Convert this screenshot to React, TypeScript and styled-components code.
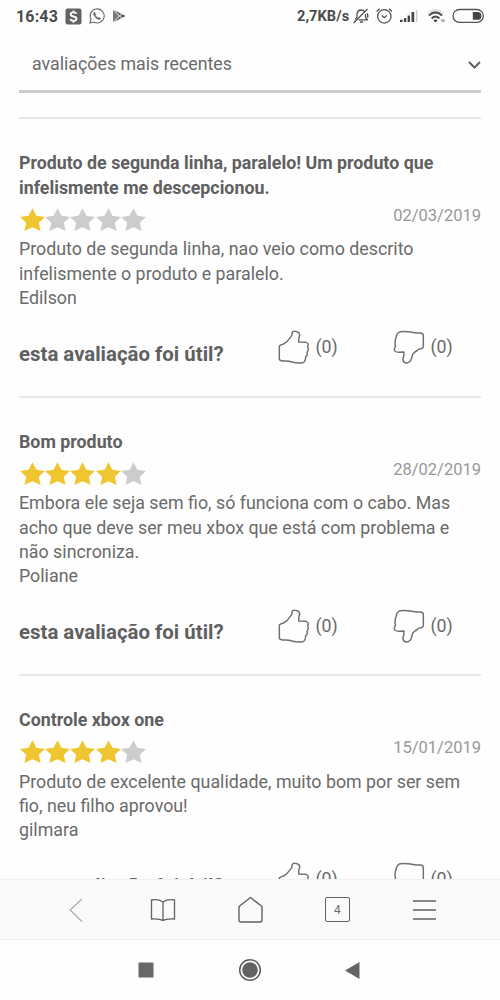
import React from 'react';
import styled, { createGlobalStyle } from 'styled-components';

const GlobalStyle = createGlobalStyle`
  *, *::before, *::after { box-sizing: border-box; }
  body { margin: 0; background: #fefefe; }
`;

const Screen = styled.div`
  display: flex;
  flex-direction: column;
  width: 500px;
  height: 1000px;
  overflow: hidden;
  background: #fefefe;
  color: #6a6a6a;
  font-family: Roboto, 'Liberation Sans', sans-serif;
  svg { display: block; flex: none; }
`;

const StatusBar = styled.header`
  display: flex;
  flex: none;
  align-items: center;
  height: 32px;
  padding: 0 15px 0 16px;
  color: #4b4b4b;
`;

const Clock = styled.span`
  width: 49px;
  font-size: 16px;
  font-weight: 700;
  letter-spacing: 0.15px;
  white-space: nowrap;
`;

const Notices = styled.div`
  display: flex;
  align-items: center;
  gap: 7px;
`;

const Indicators = styled.div`
  display: flex;
  align-items: center;
  margin-left: auto;
`;

const Speed = styled.span`
  width: 55px;
  font-size: 14.6px;
  font-weight: 700;
  letter-spacing: 0.05px;
  white-space: nowrap;
`;

const Gap = styled.span<{ $w: number }>`
  flex: none;
  width: ${(p) => p.$w}px;
`;

const Content = styled.main`
  flex: none;
  height: 847px;
  padding: 0 19px;
  overflow: hidden;
`;

const SortSelect = styled.div`
  display: flex;
  align-items: center;
  justify-content: space-between;
  height: 61px;
  padding: 4px 0 0 13px;
  margin-bottom: 24.4px;
  border-bottom: 3px solid #cccccc;
  font-size: 17.8px;
`;

const Review = styled.article`
  height: 278.2px;
  padding-top: 32px;
  border-top: 2px solid #e7e7e7;
`;

const Title = styled.h2`
  margin: 0;
  font-size: 17.82px;
  font-weight: 700;
  line-height: 24.3px;
  color: #606060;
  white-space: nowrap;
`;

const Meta = styled.div`
  display: flex;
  justify-content: space-between;
  height: 37.5px;
  padding-top: 8px;
`;

const Stars = styled.div`
  display: flex;
  padding-left: 0.5px;
`;

const DateText = styled.time`
  font-size: 16.5px;
  line-height: 16px;
  color: #989898;
`;

const Body = styled.p`
  margin: 0;
  font-size: 17.82px;
  line-height: 24.3px;
  white-space: nowrap;
`;

const Feedback = styled.div`
  display: flex;
  align-items: flex-start;
  padding-top: 20px;
`;

const Question = styled.strong`
  flex: none;
  width: 259px;
  padding-top: 11.4px;
  font-size: 20.4px;
  line-height: 24px;
  color: #606060;
  white-space: nowrap;
`;

const Vote = styled.button`
  display: flex;
  flex: none;
  width: 115px;
  gap: 5.5px;
  padding: 0;
  border: 0;
  background: none;
  color: inherit;
  font: 17.8px/33px Roboto, 'Liberation Sans', sans-serif;
`;

const BrowserBar = styled.nav`
  display: flex;
  flex: none;
  align-items: center;
  justify-content: space-between;
  height: 61px;
  padding: 0 62px;
  border-top: 1px solid #f0f0f0;
  border-bottom: 1px solid #f0f0f0;
  background: #fafafa;
`;

const TabCount = styled.span`
  display: grid;
  place-items: center;
  width: 25px;
  height: 25px;
  margin: 0 1px;
  border: 1.5px solid #626262;
  border-radius: 2px;
  font-size: 12px;
`;

const SystemBar = styled.nav`
  display: flex;
  flex: none;
  align-items: center;
  justify-content: space-between;
  height: 60px;
  padding: 0 140px 0 138px;
`;

const STAR = 'M12.5 0.2L16.4 7.8L25 8.9L18.8 14.7L20.6 23L12.5 19.2L4.4 23L6.2 14.7L0 8.9L8.6 7.8Z';

function Rating({ value }: { value: number }) {
  return (
    <Stars>
      {[0, 1, 2, 3, 4].map((i) => (
        <svg key={i} width="25.4" height="23" viewBox="0 0 25.4 23">
          <path d={STAR} fill={i < value ? '#efc62f' : '#cccccc'} />
        </svg>
      ))}
    </Stars>
  );
}

function ThumbUp() {
  return (
    <svg width="32" height="34" viewBox="0 0 96 102" fill="none" stroke="#707070" strokeWidth="4.4" strokeLinejoin="round">
      <path d="M4 48Q7 44 17 42Q20 38 25 37L37 22Q43 18 42 9Q44 3 52 4Q63 5 65 14Q66 17 63 21L62 36L84 37Q91 39 91 45Q88 49 90 54Q92 60 87 67Q90 76 83 80Q83 88 80 94Q76 100 65 99Q53 99 42 96Q31 92 18 93Q7 93 4 88V48Z" />
    </svg>
  );
}

function ThumbDown() {
  return (
    <svg width="32" height="34" viewBox="0 0 96 102" fill="none" stroke="#707070" strokeWidth="4.4" strokeLinejoin="round">
      <path d="M21 5Q36 3 53 6Q66 10 82 9Q91 10 91 17V50Q90 56 84 56Q77 56 73 61Q68 65 64 67Q57 72 57 81Q55 86 53 92Q47 100 40 99Q32 98 30 90Q29 86 32 80L33 66L17 67Q5 66 4 60Q4 52 8 48Q4 41 7 35Q6 29 9 24Q10 11 21 5Z" />
    </svg>
  );
}

type ReviewData = { title: string[]; stars: number; date: string; lines: string[] };

const REVIEWS: ReviewData[] = [
  {
    title: ['Produto de segunda linha, paralelo! Um produto que', 'infelismente me descepcionou.'],
    stars: 1,
    date: '02/03/2019',
    lines: ['Produto de segunda linha, nao veio como descrito', 'infelismente o produto e paralelo.', 'Edilson'],
  },
  {
    title: ['Bom produto'],
    stars: 4,
    date: '28/02/2019',
    lines: ['Embora ele seja sem fio, só funciona com o cabo. Mas', 'acho que deve ser meu xbox que está com problema e', 'não sincroniza.', 'Poliane'],
  },
  {
    title: ['Controle xbox one'],
    stars: 4,
    date: '15/01/2019',
    lines: ['Produto de excelente qualidade, muito bom por ser sem', 'fio, neu filho aprovou!', 'gilmara'],
  },
];

function Lines({ items }: { items: string[] }) {
  return (
    <>
      {items.map((line, i) => (
        <React.Fragment key={line}>
          {i > 0 && <br />}
          {line}
        </React.Fragment>
      ))}
    </>
  );
}

export default function App() {
  return (
    <Screen>
      <GlobalStyle />
      <StatusBar>
        <Clock>16:43</Clock>
        <Notices>
          <svg width="17" height="17" viewBox="0 0 17 17">
            <rect x="0.5" y="0.5" width="16" height="16" rx="2" fill="#636363" />
            <path d="M11.5 5.8Q11 4.3 8.5 4.3Q5.6 4.3 5.6 6.3Q5.6 8 8.5 8.5Q11.5 9 11.5 10.8Q11.5 12.8 8.5 12.8Q5.8 12.8 5.3 11M8.5 2.4V4.4M8.5 12.6V14.8" fill="none" stroke="#fff" strokeWidth="1.8" />
          </svg>
          <svg width="16" height="16" viewBox="0 0 16 16" fill="none" stroke="#666">
            <path d="M1 15L2 11.2A7 7 0 1 1 4.7 14Z" strokeWidth="1.1" />
            <path d="M5.2 4.2C4 5.2 4.4 7.1 6.6 9.4S10.7 12 11.8 10.7L10.2 9.4L9.2 10Q7.2 9.2 6.2 7L6.8 6Z" fill="#666" strokeWidth="0.5" />
          </svg>
          <svg width="15" height="16" viewBox="0 0 15 16">
            <path d="M1 2V14L7 8Z" fill="#777" />
            <path d="M2 2L9.5 6L7.6 7.6ZM2 14L9.5 10L7.6 8.4ZM8.3 8L10.2 6.3L13.6 8L10.2 9.7Z" fill="#555" />
          </svg>
        </Notices>
        <Indicators>
          <Speed>2,7KB/s</Speed>
          <svg width="19" height="18" viewBox="0 0 19 18" fill="none" stroke="#505050" strokeWidth="1.3">
            <path d="M3 12.3Q5 11.5 5 9V7.5Q5 3 9.2 3Q11.5 3 12.5 4.6M13.5 7V9.5Q13.5 11.8 15.8 12.8H6.5M8 15H11.2M1.5 16L15.5 2M15.2 6.2Q16.4 8.5 15.4 10.5" />
          </svg>
          <Gap $w={4} />
          <svg width="18" height="18" viewBox="0 0 18 18" fill="none" stroke="#505050" strokeWidth="1.3">
            <circle cx="9.3" cy="9.4" r="6.7" />
            <path d="M6.8 8.4L9.3 10.7L11.8 8.4M1.6 4.4L4.6 1.8M14 1.8L17 4.4" />
          </svg>
          <Gap $w={7} />
          <svg width="20" height="16" viewBox="0 0 20 16">
            <path d="M0 11.8H2.6V14H0ZM3.9 10H6.3V14H3.9ZM7.6 7.6H10V14H7.6ZM11.5 4H14.2V14H11.5Z" fill="#484848" />
            <path d="M16 2H17.4V14H16Z" fill="#ccc" />
          </svg>
          <Gap $w={7} />
          <svg width="20" height="18" viewBox="0 0 20 18" fill="none">
            <path d="M0.8 6Q8.5 -0.5 16.2 6" stroke="#ddd" strokeWidth="1.6" />
            <path d="M1.9 8.4Q8.5 2.4 15.1 8.4M4.6 11.4Q8.5 7.8 12.4 11.4" stroke="#505050" strokeWidth="2" />
            <path d="M6.3 13.3Q8.5 11.5 10.7 13.3L8.5 15.6Z" fill="#444" />
            <path d="M15 12V14.5M16.8 12.5V15" stroke="#777" strokeWidth="1.1" />
          </svg>
          <Gap $w={5} />
          <svg width="33" height="16" viewBox="0 0 33 16">
            <rect x="1" y="1.5" width="30.3" height="12.8" rx="6.4" fill="none" stroke="#555" strokeWidth="1.3" />
            <path d="M20.8 4H25.5A3.9 3.9 0 0 1 25.5 11.8H20.8Z" fill="#444" />
          </svg>
        </Indicators>
      </StatusBar>
      <Content>
        <SortSelect>
          avaliações mais recentes
          <svg width="13" height="11" viewBox="0 0 13 11" fill="none" stroke="#606060" strokeWidth="2">
            <path d="M1 4L6.5 9.5L12 4" />
          </svg>
        </SortSelect>
        {REVIEWS.map((r) => (
          <Review key={r.date}>
            <Title><Lines items={r.title} /></Title>
            <Meta>
              <Rating value={r.stars} />
              <DateText>{r.date}</DateText>
            </Meta>
            <Body><Lines items={r.lines} /></Body>
            <Feedback>
              <Question>esta avaliação foi útil?</Question>
              <Vote><ThumbUp />(0)</Vote>
              <Vote><ThumbDown />(0)</Vote>
            </Feedback>
          </Review>
        ))}
      </Content>
      <BrowserBar>
        <svg width="27" height="26" viewBox="0 0 27 26" fill="none" stroke="#aaa" strokeWidth="1.2">
          <path d="M20 2L8 13L20 24.5" />
        </svg>
        <svg width="27" height="26" viewBox="0 0 27 26" fill="none" stroke="#626262" strokeWidth="1.3">
          <path d="M14 5Q9.5 1.8 2.5 3V22Q10.5 21.5 14 23.5Q17.5 21.5 25.5 22V3Q18.5 1.8 14 5ZM14 5V23.5" />
        </svg>
        <svg width="27" height="28" viewBox="0 0 27 28" fill="none" stroke="#626262" strokeWidth="1.4" strokeLinejoin="round">
          <path d="M2 10.5L13.5 1.5L25 10.5V24Q25 26 23 26H4Q2 26 2 24Z" />
        </svg>
        <TabCount>4</TabCount>
        <svg width="27" height="26" viewBox="0 0 27 26" stroke="#626262" strokeWidth="1.5">
          <path d="M2 4H25M2 13H25M2 22H25" />
        </svg>
      </BrowserBar>
      <SystemBar>
        <svg width="16" height="16" viewBox="0 0 16 16"><rect x="0.5" y="0.5" width="15" height="15" rx="0.5" fill="#676767" /></svg>
        <svg width="24" height="24" viewBox="0 0 24 24">
          <circle cx="12" cy="12" r="10.3" fill="none" stroke="#5c5c5c" strokeWidth="1.5" />
          <circle cx="12" cy="12" r="7.8" fill="#626262" />
        </svg>
        <svg width="15" height="17" viewBox="0 0 15 17"><path d="M0 8.5L14.5 0V17Z" fill="#646464" /></svg>
      </SystemBar>
    </Screen>
  );
}
